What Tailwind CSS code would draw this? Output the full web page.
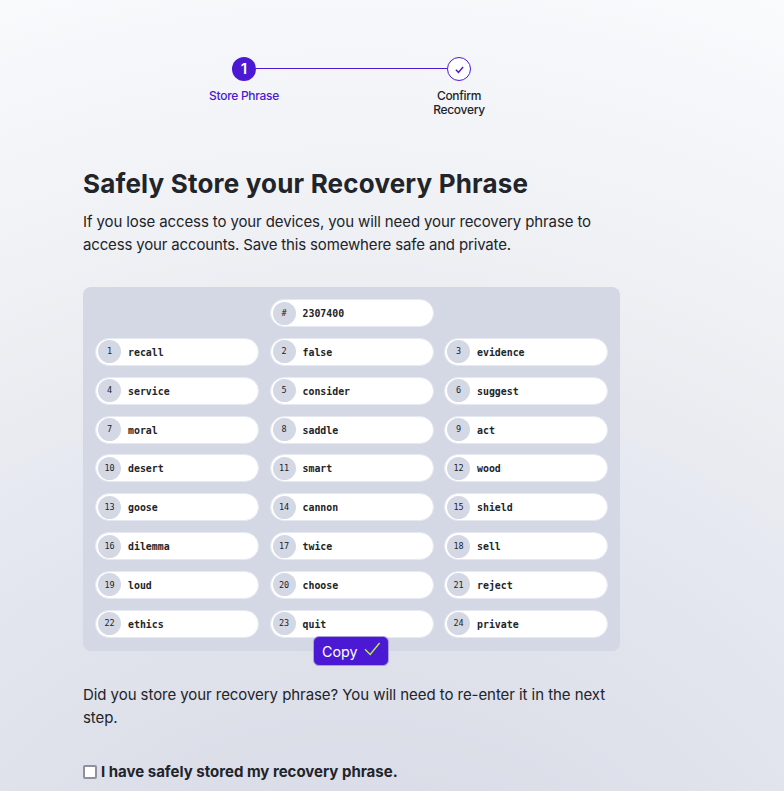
<!DOCTYPE html>
<html lang="en">
<head>
<meta charset="utf-8">
<title>Recovery Phrase</title>
<script src="https://cdn.jsdelivr.net/npm/@tailwindcss/browser@4"></script>
</head>
<body class="h-[791px] overflow-hidden bg-[radial-gradient(circle_at_351px_1100px,#dadce7_300px,#dfe1eb_460px,#e6e9f1_690px,#eaebf0_745px,#f1f2f6_920px,#f6f7fa_1080px,#fafbfc_1180px)] font-['Inter',sans-serif] text-[#212429]">
<main class="ml-[83px] flex w-[537px] flex-col">
  <ol class="mt-[57px] flex h-[60px] justify-center text-[12px] leading-[14px] font-medium">
    <li class="flex w-[215px] flex-col items-center">
      <div class="flex w-full items-center">
        <span class="flex-1"></span>
        <span class="flex size-6 items-center justify-center rounded-full bg-[#4b18d3] text-[15px] font-semibold text-white">1</span>
        <span class="mb-[2px] h-px flex-1 bg-[#4b18d3]"></span>
      </div>
      <span class="mt-2 tracking-[-0.3px] text-[#4b18d3]">Store Phrase</span>
    </li>
    <li class="flex w-[215px] flex-col items-center">
      <div class="flex w-full items-center">
        <span class="mb-[2px] h-px flex-1 bg-[#4b18d3]"></span>
        <span class="flex size-6 items-center justify-center rounded-full border border-[#4b18d3] bg-white">
          <svg class="size-[9px]" viewBox="0 0 10 10" fill="none" stroke="#4b18d3" stroke-width="1.6"><path d="M1 5.4 3.8 8.2 9 2.2"/></svg>
        </span>
        <span class="flex-1"></span>
      </div>
      <span class="mt-2 text-center tracking-[-0.3px]">Confirm<br>Recovery</span>
    </li>
  </ol>

  <h1 class="mt-[49px] text-[26px] leading-[36px] font-bold tracking-[0.18px] whitespace-nowrap">Safely Store your Recovery Phrase</h1>
  <p class="mt-[8px] text-[15px] leading-[23px] tracking-[-0.11px] whitespace-nowrap">If you lose access to your devices, you will need your recovery phrase to<br><span class="tracking-[-0.16px]">access your accounts. Save this somewhere safe and private.</span></p>

  <section class="relative mt-[31px] h-[364px] rounded-[8px] bg-[#d4d8e4] px-[12px] pt-[12px]">
    <div id="words" class="grid grid-cols-3 gap-x-[10.5px] gap-y-[10.85px] font-['DejaVu_Sans_Mono',monospace]"></div>
    <button class="absolute top-[349px] left-[230px] flex h-[30px] w-[76px] items-center rounded-[6px] border border-[#aaa2dc] bg-[#4b18d3] pt-[2px] pl-[8px] text-[14.3px] text-white">Copy
      <svg class="ml-[6px] mb-[6px] h-[14px] w-[17px]" viewBox="0 0 17 14" fill="none" stroke="#b5f23d" stroke-width="1.4"><path d="M1 7.2 6.2 12.4 15.6 1"/></svg>
    </button>
  </section>

  <p class="mt-[32px] text-[15px] leading-[23px] tracking-[-0.06px] whitespace-nowrap">Did you store your recovery phrase? You will need to re-enter it in the next<br>step.</p>
  <label class="mt-[31px] flex items-center text-[15px] leading-[23px] font-bold whitespace-nowrap">
    <input type="checkbox" class="mr-[4px] size-[14px] appearance-none rounded-[2px] border-2 border-[#8f8f9d] bg-white">
    <span>I have safely stored my recovery phrase.</span>
  </label>
</main>
<script>
const words = 'recall false evidence service consider suggest moral saddle act desert smart wood goose cannon shield dilemma twice sell loud choose reject ethics quit private'.split(' ');
const pill = (n, w, col = '') => `<div class="${col} flex h-[28px] items-center rounded-full border border-[#e6e9f2] bg-white pl-[2px]"><span class="flex size-[23px] items-center justify-center rounded-full bg-[#d4d8e4] text-[8.5px]">${n}</span><span class="ml-[7px] pt-[3px] text-[9.9px] font-bold">${w}</span></div>`;
document.getElementById('words').innerHTML = pill('#', '2307400', 'col-start-2') + words.map((w, i) => pill(i + 1, w, i === 0 ? 'col-start-1' : '')).join('');
</script>
</body>
</html>
